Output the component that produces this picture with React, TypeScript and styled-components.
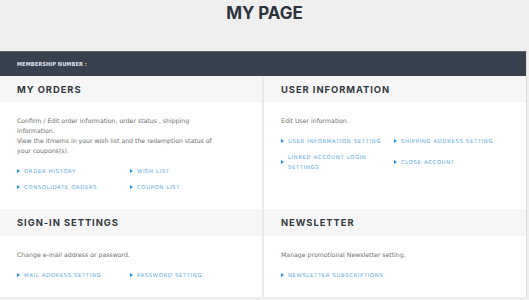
import React from 'react';
import styled, { createGlobalStyle } from 'styled-components';

const GlobalStyle = createGlobalStyle`
  body {
    margin: 0;
    background: #efefef;
    font-family: 'DejaVu Sans', 'Noto Sans', sans-serif;
  }
`;

const Page = styled.div`
  width: 529px;
  height: 300px;
  overflow: hidden;
`;

const Title = styled.h1`
  margin: 0;
  height: 51px;
  padding-top: 3px;
  box-sizing: border-box;
  text-align: center;
  font-family: 'Inter', sans-serif;
  font-size: 17px;
  font-weight: 700;
  line-height: 20px;
  color: #2c333c;
  letter-spacing: -0.1px;
`;

const Container = styled.div`
  width: 526px;
  box-shadow: 1px 0 1px rgba(0, 0, 0, 0.06);
`;

const MemberBar = styled.div`
  height: 25px;
  box-sizing: border-box;
  background: #37424e;
  border-top: 1px solid #5d6772;
  display: flex;
  align-items: center;
  padding-left: 17px;
  font-family: 'Liberation Sans Narrow', 'DejaVu Sans Condensed', 'Liberation Sans', sans-serif;
  font-stretch: condensed;
  font-weight: 700;
  font-size: 5.6px;
  letter-spacing: 0.1px;
  color: #dfe4ec;
`;

const Grid = styled.div`
  display: grid;
  grid-template-columns: 262px 262px;
  column-gap: 2px;
  background: #e9e9e9;
  border-top: 1px solid #f4f4f4;
`;

const Section = styled.section`
  background: #ffffff;
  display: flex;
  flex-direction: column;
`;

const SectionHead = styled.h2<{ $tall?: boolean }>`
  margin: 0;
  height: ${(p) => (p.$tall ? 27 : 25)}px;
  display: flex;
  align-items: center;
  padding: 0 17px;
  background: #f6f6f6;
  font-family: 'Inter', sans-serif;
  font-size: 9.4px;
  font-weight: 700;
  letter-spacing: 0.95px;
  color: #333a40;
`;

const SectionBody = styled.div`
  padding: 14px 17px 14px;
  flex: 1;
`;

const Desc = styled.p`
  margin: 0;
  max-width: 205px;
  font-size: 6.2px;
  line-height: 10px;
  color: #6e6e6e;
`;

const Links = styled.ul`
  list-style: none;
  margin: 7px 0 0;
  padding: 0;
  display: grid;
  grid-template-columns: 113px 113px;
`;

const LinkItem = styled.li`
  display: flex;
  align-items: center;
  padding: 3px 0;
  font-size: 5.3px;
  line-height: 10px;
  letter-spacing: 0.65px;
  color: #4ea8e4;

  &::before {
    content: '';
    flex: none;
    width: 0;
    height: 0;
    margin-right: 4px;
    border-left: 3.5px solid #1f8fe0;
    border-top: 2px solid transparent;
    border-bottom: 2px solid transparent;
  }

  span {
    max-width: 100px;
  }
`;

type Block = { title: string; text: React.ReactNode; links: string[]; tall?: boolean };

const blocks: Block[] = [
  {
    title: 'MY ORDERS',
    text: (
      <>
        Confirm / Edit order information, order status , shipping information.
        <br />
        View the itmems in your wish list and the redemption status of your coupons(s).
      </>
    ),
    links: ['ORDER HISTORY', 'WISH LIST', 'CONSOLIDATE ORDERS', 'COUPON LIST'],
  },
  {
    title: 'USER INFORMATION',
    text: 'Edit User information.',
    links: ['USER INFORMATION SETTING', 'SHIPPING ADDRESS SETTING', 'LINKED ACCOUNT LOGIN SETTINGS', 'CLOSE ACCOUNT'],
  },
  {
    title: 'SIGN-IN SETTINGS',
    text: 'Change e-mail address or password.',
    links: ['MAIL ADDRESS SETTING', 'PASSWORD SETTING'],
    tall: true,
  },
  {
    title: 'NEWSLETTER',
    text: 'Manage promotional Newsletter setting.',
    links: ['NEWSLETTER SUBSCRIPTIONS'],
    tall: true,
  },
];

const App: React.FC = () => {
  return (
    <Page>
      <GlobalStyle />
      <Title>MY PAGE</Title>
      <Container>
        <MemberBar>MEMBERSHIP NUMBER :</MemberBar>
        <Grid>
          {blocks.map((b) => (
            <Section key={b.title}>
              <SectionHead $tall={b.tall}>{b.title}</SectionHead>
              <SectionBody>
                <Desc>{b.text}</Desc>
                <Links>
                  {b.links.map((l) => (
                    <LinkItem key={l}>
                      <span>{l}</span>
                    </LinkItem>
                  ))}
                </Links>
              </SectionBody>
            </Section>
          ))}
        </Grid>
      </Container>
    </Page>
  );
};

export default App;
